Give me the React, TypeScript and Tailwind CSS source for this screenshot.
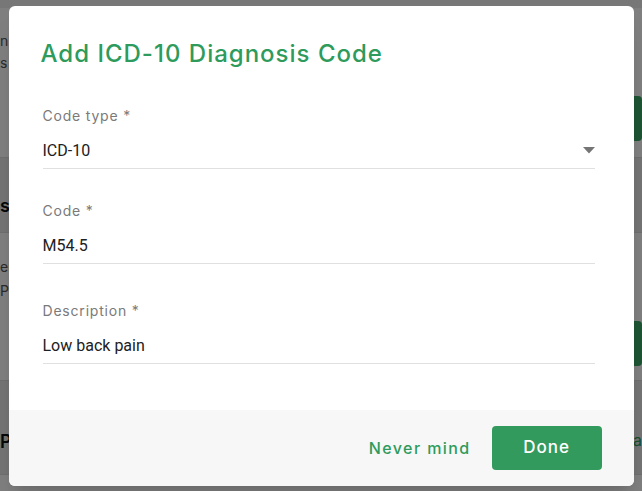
const headFont = { fontFamily: 'Inter, "Open Sans", sans-serif' };

const Field = ({ label, value, select, className }: { label: string; value: string; select?: boolean; className?: string }) => (
  <div className={`ml-[34px] w-[552px] ${className || ''}`}>
    <div className="text-sm leading-5 tracking-[0.8px] text-[#7a7a7a] font-[Inter,sans-serif]">{label}</div>
    <div className="mt-[13px] flex items-center justify-between border-b border-[#e0e0e0] pb-[5px]">
      <span className="text-base leading-6 text-[#212121] font-[Roboto,sans-serif]">{value}</span>
      {select && (
        <svg width="12" height="7" viewBox="0 0 12 7">
          <polygon points="0,0 12,0 6,6.5" fill="#757575" />
        </svg>
      )}
    </div>
  </div>
);

const App = () => {
  return (
    <div className="relative w-[642px] h-[491px] overflow-hidden bg-white font-[Inter,sans-serif]">
      {/* page behind the dialog */}
      <div className="flex flex-col">
        <div className="h-2 bg-[#eeeeee]" />
        <div className="h-[149px] flex">
          <div className="w-[634px] pt-[22px] text-sm leading-[22px] text-[#555]">
            <div>n</div>
            <div>s</div>
          </div>
          <div className="shrink-0 pt-[22px] text-sm text-[#555]">
            <div className="leading-[22px]">nt</div>
            <div className="mt-[44px] h-[45px] w-16 rounded bg-[#3aa866] text-white text-sm flex items-center pl-1">d</div>
          </div>
        </div>
        <div className="h-[76px] bg-[#e8e8e8] border-y border-[#dddddd] flex items-end pb-[12px]">
          <span className="text-lg font-semibold text-[#111]">s</span>
        </div>
        <div className="h-[147px] flex">
          <div className="w-[634px] pt-[22px] text-sm leading-[24px] text-[#555]">
            <div>er</div>
            <div>Pa</div>
          </div>
          <div className="shrink-0 pt-[22px] text-sm text-[#555]">
            <div className="leading-[24px]">m</div>
            <div className="mt-[42px] h-[45px] w-16 rounded bg-[#3aa866] text-white text-sm flex items-center pl-1">d</div>
          </div>
        </div>
        <div className="h-[95px] bg-[#e8e8e8] border-y border-[#dddddd] flex items-end pb-[18px]">
          <span className="w-[634px] text-lg font-semibold text-[#111]">Pr</span>
          <span className="text-base text-[#2e9b5c] mb-1">a</span>
        </div>
        <div className="h-4" />
      </div>

      {/* overlay + dialog */}
      <div className="absolute inset-0 bg-black/50 flex items-center justify-center">
        <div className="w-[625px] rounded-md bg-white shadow-xl overflow-hidden flex flex-col">
          <div className="pt-8 pb-[46px]">
            <h2 className="pl-8 text-[24px] leading-8 tracking-[1px] font-medium text-[#2e9b5c]" style={headFont}>
              Add ICD-10 Diagnosis Code
            </h2>
            <Field className="mt-9" label="Code type *" value="ICD-10" select />
            <Field className="mt-8" label="Code *" value="M54.5" />
            <Field className="mt-[37px]" label="Description *" value="Low back pain" />
          </div>
          <div className="bg-[#f7f7f7] py-4 pr-8 flex items-center justify-end gap-[21px]">
            <button className="text-base tracking-[1.4px] font-medium text-[#2e9b5c]" style={headFont}>Never mind</button>
            <button className="h-11 w-[110px] rounded bg-[#339a5d] text-white text-[17px] tracking-[1px] font-medium" style={headFont}>
              Done
            </button>
          </div>
        </div>
      </div>
    </div>
  );
};

export default App;
